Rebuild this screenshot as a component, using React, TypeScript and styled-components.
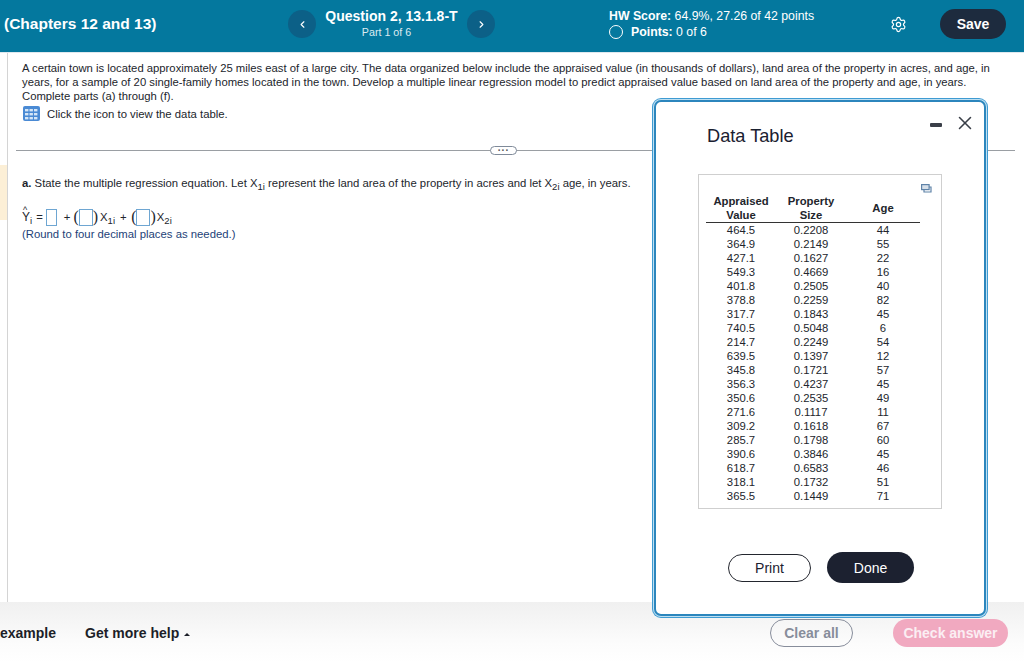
import React from "react";
import styled, { createGlobalStyle } from "styled-components";
import { Settings, ChevronLeft, ChevronRight, X } from "lucide-react";

const Global = createGlobalStyle`
  html, body { margin: 0; padding: 0; background: #fff; overflow: hidden; }
  * { box-sizing: border-box; }
  body { font-family: "Liberation Sans", Arial, sans-serif; color: #1c2130; }
`;

const Page = styled.div`
  position: relative;
  width: 1024px;
  height: 662px;
  display: flex;
  flex-direction: column;
  overflow: hidden;
`;

const Header = styled.header`
  height: 53px;
  flex: none;
  background: #04789e;
  color: #fff;
  display: flex;
  align-items: center;
  padding-bottom: 4px;
  border-bottom: 1px solid #dfe8ee;
`;

const Chapter = styled.div`
  width: 288px;
  padding-left: 4px;
  font-size: 15.5px;
  font-weight: 700;
  white-space: nowrap;
`;

const NavButton = styled.div`
  width: 28px;
  height: 28px;
  border-radius: 50%;
  background: #0c6087;
  display: flex;
  align-items: center;
  justify-content: center;
  flex: none;
`;

const QuestionInfo = styled.div`
  width: 151px;
  text-align: center;
`;

const QuestionTitle = styled.div`
  font-size: 14px;
  font-weight: 700;
  line-height: 17px;
`;

const QuestionPart = styled.div`
  font-size: 10.7px;
  line-height: 15px;
  color: #dcebf1;
  padding-right: 10px;
`;

const Score = styled.div`
  margin-left: 114px;
  width: 280.5px;
  font-size: 12.3px;
  line-height: 16px;
`;

const ScoreRow = styled.div`
  display: flex;
  align-items: center;
`;

const Ring = styled.span`
  width: 14px;
  height: 14px;
  border: 1.5px solid #fff;
  border-radius: 50%;
  margin-right: 8px;
`;

const SaveButton = styled.div`
  width: 66px;
  height: 30px;
  margin-left: 33.5px;
  border-radius: 15px;
  background: #1d2b3e;
  font-size: 14px;
  font-weight: 700;
  display: flex;
  align-items: center;
  justify-content: center;
`;

const Main = styled.main`
  flex: 1;
  position: relative;
  margin-left: 7px;
  border-left: 1px solid #d4d4d4;
  padding: 8px 8px 0 14px;
  font-size: 11.33px;
  line-height: 14px;
  color: #22252c;
`;

const Marker = styled.div`
  position: absolute;
  left: -8px;
  top: 112px;
  width: 7px;
  height: 55px;
  background: #fcefd6;
`;

const Paragraph = styled.p`
  margin: 0;
  width: 975px;
  font-size: 11.29px;
`;

const HintRow = styled.div`
  display: flex;
  align-items: center;
  gap: 7px;
  margin-top: 3px;
  margin-left: 1px;
`;

const Divider = styled.div`
  position: relative;
  height: 1px;
  width: 999px;
  margin: 29px 0 0 -6px;
  background: #9a9ea3;
`;

const Pill = styled.div`
  position: absolute;
  left: 474px;
  top: -4px;
  width: 27px;
  height: 9px;
  border: 1px solid #7f8a99;
  border-radius: 5px;
  background: #fff;
  font-size: 10px;
  line-height: 7px;
  font-weight: 700;
  letter-spacing: 0.5px;
  text-align: center;
  color: #555;
`;

const PartA = styled.p`
  margin: 25px 0 0;
  white-space: nowrap;
`;

const Sub = styled.sub`
  font-size: 9.5px;
  line-height: 0;
`;

const Equation = styled.div`
  display: flex;
  align-items: center;
  height: 20px;
  margin-top: 17px;
`;

const Term = styled.span<{ $ml?: number }>`
  margin-left: ${(p) => p.$ml ?? 0}px;
  white-space: nowrap;
`;

const HatY = styled.span`
  position: relative;
  font-size: 12px;
  &::before {
    content: "^";
    position: absolute;
    left: 1px;
    top: -7px;
    font-size: 9px;
  }
`;

const AnswerBox = styled.span<{ $w: number; $ml?: number }>`
  display: inline-block;
  flex: none;
  width: ${(p) => p.$w}px;
  height: 17px;
  margin-left: ${(p) => p.$ml ?? 0}px;
  border: 1px solid #6ea6d2;
`;

const Paren = styled.span<{ $ml?: number }>`
  margin-left: ${(p) => p.$ml ?? 0}px;
  font-family: "Liberation Serif", serif;
  font-size: 16px;
  line-height: 18px;
  margin-top: -1px;
`;

const Note = styled.div`
  color: #1d3f78;
  line-height: 14px;
`;

const Footer = styled.footer`
  height: 60px;
  flex: none;
  background: linear-gradient(#f0f0f0, #fcfcfc 70%, #fff);
  display: flex;
  align-items: center;
  padding: 1px 16px 0 0;
  font-size: 14px;
  font-weight: 700;
  color: #1c1f28;
`;

const Help = styled.span`
  margin-left: 29px;
  flex: 1;
`;

const Caret = styled.span`
  display: inline-block;
  margin-left: 5px;
  vertical-align: 2px;
  border-left: 3px solid transparent;
  border-right: 3px solid transparent;
  border-bottom: 3px solid #1c1f28;
`;

const ClearButton = styled.div`
  width: 83px;
  height: 28px;
  border: 1.5px solid #878d9b;
  border-radius: 14px;
  color: #878d9b;
  display: flex;
  align-items: center;
  justify-content: center;
`;

const CheckButton = styled.div`
  width: 115px;
  height: 28px;
  margin-left: 40px;
  border-radius: 14px;
  background: #f1a9c0;
  color: #fbeef3;
  display: flex;
  align-items: center;
  justify-content: center;
`;

const Modal = styled.section`
  position: absolute;
  left: 654px;
  top: 100px;
  width: 332px;
  height: 516px;
  background: #fff;
  border: 2px solid #2c86bd;
  box-shadow: 0 0 0 1px #bfe0f2, 0 0 0 2px #3f9bd2;
  border-radius: 7px;
  padding: 23px 0 0 42px;
  display: flex;
  flex-direction: column;
`;

const ModalTitle = styled.h2`
  margin: 0 0 0 9px;
  font-size: 18.2px;
  line-height: 22px;
  font-weight: 400;
  color: #1a2030;
`;

const WindowControls = styled.div`
  position: absolute;
  right: 8px;
  top: 9.5px;
  display: flex;
  align-items: center;
  gap: 12px;
`;

const Minimize = styled.span`
  width: 12px;
  height: 4px;
  margin-top: 4px;
  background: #3a3f48;
  border-radius: 1px;
`;

const TableCard = styled.div`
  position: relative;
  width: 244px;
  height: 335px;
  margin-top: 27px;
  border: 1px solid #cfcfcf;
  padding: 19px 0 0 7px;
`;

const CopyIcon = styled.svg`
  position: absolute;
  right: 9px;
  top: 9px;
`;

const DataGrid = styled.table`
  border-collapse: collapse;
  width: 214px;
  font-size: 11.3px;
  color: #22252c;
  table-layout: fixed;
  text-align: center;
`;

const HeadRow = styled.tr`
  border-bottom: 1px solid #333;
`;

const HeadCell = styled.th<{ $w: number }>`
  width: ${(p) => p.$w}px;
  padding: 0;
  font-weight: 700;
  line-height: 14px;
`;

const Cell = styled.td`
  padding: 0;
  height: 14px;
  line-height: 14px;
`;

const ModalActions = styled.div`
  display: flex;
  gap: 16px;
  margin: 43px 0 0 30px;
  font-size: 14px;
`;

const PrintButton = styled.div`
  width: 83px;
  height: 28px;
  margin-top: 2px;
  border: 1.5px solid #23262e;
  border-radius: 14px;
  display: flex;
  align-items: center;
  justify-content: center;
`;

const DoneButton = styled.div`
  width: 87px;
  height: 31px;
  border-radius: 16px;
  background: #1c2130;
  color: #fff;
  display: flex;
  align-items: center;
  justify-content: center;
`;

const rows: [string, string, string][] = [
  ["464.5", "0.2208", "44"],
  ["364.9", "0.2149", "55"],
  ["427.1", "0.1627", "22"],
  ["549.3", "0.4669", "16"],
  ["401.8", "0.2505", "40"],
  ["378.8", "0.2259", "82"],
  ["317.7", "0.1843", "45"],
  ["740.5", "0.5048", "6"],
  ["214.7", "0.2249", "54"],
  ["639.5", "0.1397", "12"],
  ["345.8", "0.1721", "57"],
  ["356.3", "0.4237", "45"],
  ["350.6", "0.2535", "49"],
  ["271.6", "0.1117", "11"],
  ["309.2", "0.1618", "67"],
  ["285.7", "0.1798", "60"],
  ["390.6", "0.3846", "45"],
  ["618.7", "0.6583", "46"],
  ["318.1", "0.1732", "51"],
  ["365.5", "0.1449", "71"],
];

const GridIcon = () => (
  <svg width="17" height="15" viewBox="0 0 17 15">
    <rect width="17" height="15" rx="2" fill="#4a8ad4" />
    {[2, 6.5, 11].flatMap((x) =>
      [3, 7, 11].map((y) => <rect key={`${x}-${y}`} x={x} y={y} width="3.4" height="2.4" fill="#d5e6f7" />)
    )}
  </svg>
);

export default function App() {
  return (
    <Page>
      <Global />
      <Header>
        <Chapter>(Chapters 12 and 13)</Chapter>
        <NavButton><ChevronLeft size={11} color="#fff" strokeWidth={2.5} /></NavButton>
        <QuestionInfo>
          <QuestionTitle>Question 2, 13.1.8-T</QuestionTitle>
          <QuestionPart>Part 1 of 6</QuestionPart>
        </QuestionInfo>
        <NavButton><ChevronRight size={11} color="#fff" strokeWidth={2.5} /></NavButton>
        <Score>
          <div><b>HW Score:</b> 64.9%, 27.26 of 42 points</div>
          <ScoreRow><Ring /><span><b>Points:</b> 0 of 6</span></ScoreRow>
        </Score>
        <Settings size={17} color="#fff" strokeWidth={1.7} />
        <SaveButton>Save</SaveButton>
      </Header>
      <Main>
        <Marker />
        <Paragraph>
          A certain town is located approximately 25 miles east of a large city. The data organized below include the appraised value (in thousands of dollars), land area of the property in acres, and age, in years, for a sample of 20 single-family homes located in the town. Develop a multiple linear regression model to predict appraised value based on land area of the property and age, in years. Complete parts (a) through (f).
        </Paragraph>
        <HintRow><GridIcon /><span>Click the icon to view the data table.</span></HintRow>
        <Divider><Pill>···</Pill></Divider>
        <PartA>
          <b>a.</b> State the multiple regression equation. Let X<Sub>1i</Sub> represent the land area of the property in acres and let X<Sub>2i</Sub> age, in years.
        </PartA>
        <Equation>
          <Term><HatY>Y</HatY><Sub>i</Sub></Term>
          <Term $ml={4}>=</Term>
          <AnswerBox $w={11} $ml={3} />
          <Term $ml={7}>+</Term>
          <Paren $ml={3}>(</Paren>
          <AnswerBox $w={14} />
          <Paren>)</Paren>
          <Term $ml={2}>X<Sub>1i</Sub></Term>
          <Term $ml={5}>+</Term>
          <Paren $ml={4.5}>(</Paren>
          <AnswerBox $w={14} />
          <Paren>)</Paren>
          <Term $ml={1}>X<Sub>2i</Sub></Term>
        </Equation>
        <Note>(Round to four decimal places as needed.)</Note>
      </Main>
      <Footer>
        <span>example</span>
        <Help>Get more help<Caret /></Help>
        <ClearButton>Clear all</ClearButton>
        <CheckButton>Check answer</CheckButton>
      </Footer>
      <Modal>
        <ModalTitle>Data Table</ModalTitle>
        <WindowControls>
          <Minimize />
          <X size={22} color="#3a3f48" strokeWidth={1.7} />
        </WindowControls>
        <TableCard>
          <CopyIcon width="11" height="9" viewBox="0 0 11 9" fill="none" stroke="#5f83a8" strokeWidth="1.2">
            <rect x="0.6" y="0.6" width="7.5" height="5" fill="#5f83a8" fillOpacity="0.25" />
            <path d="M3 6v2h7V3H8" />
          </CopyIcon>
          <DataGrid>
            <thead>
              <HeadRow>
                <HeadCell $w={70}>Appraised<br />Value</HeadCell>
                <HeadCell $w={70}>Property<br />Size</HeadCell>
                <HeadCell $w={74}>Age</HeadCell>
              </HeadRow>
            </thead>
            <tbody>
              {rows.map((r) => (
                <tr key={r[0]}>
                  <Cell>{r[0]}</Cell>
                  <Cell>{r[1]}</Cell>
                  <Cell>{r[2]}</Cell>
                </tr>
              ))}
            </tbody>
          </DataGrid>
        </TableCard>
        <ModalActions>
          <PrintButton>Print</PrintButton>
          <DoneButton>Done</DoneButton>
        </ModalActions>
      </Modal>
    </Page>
  );
}
